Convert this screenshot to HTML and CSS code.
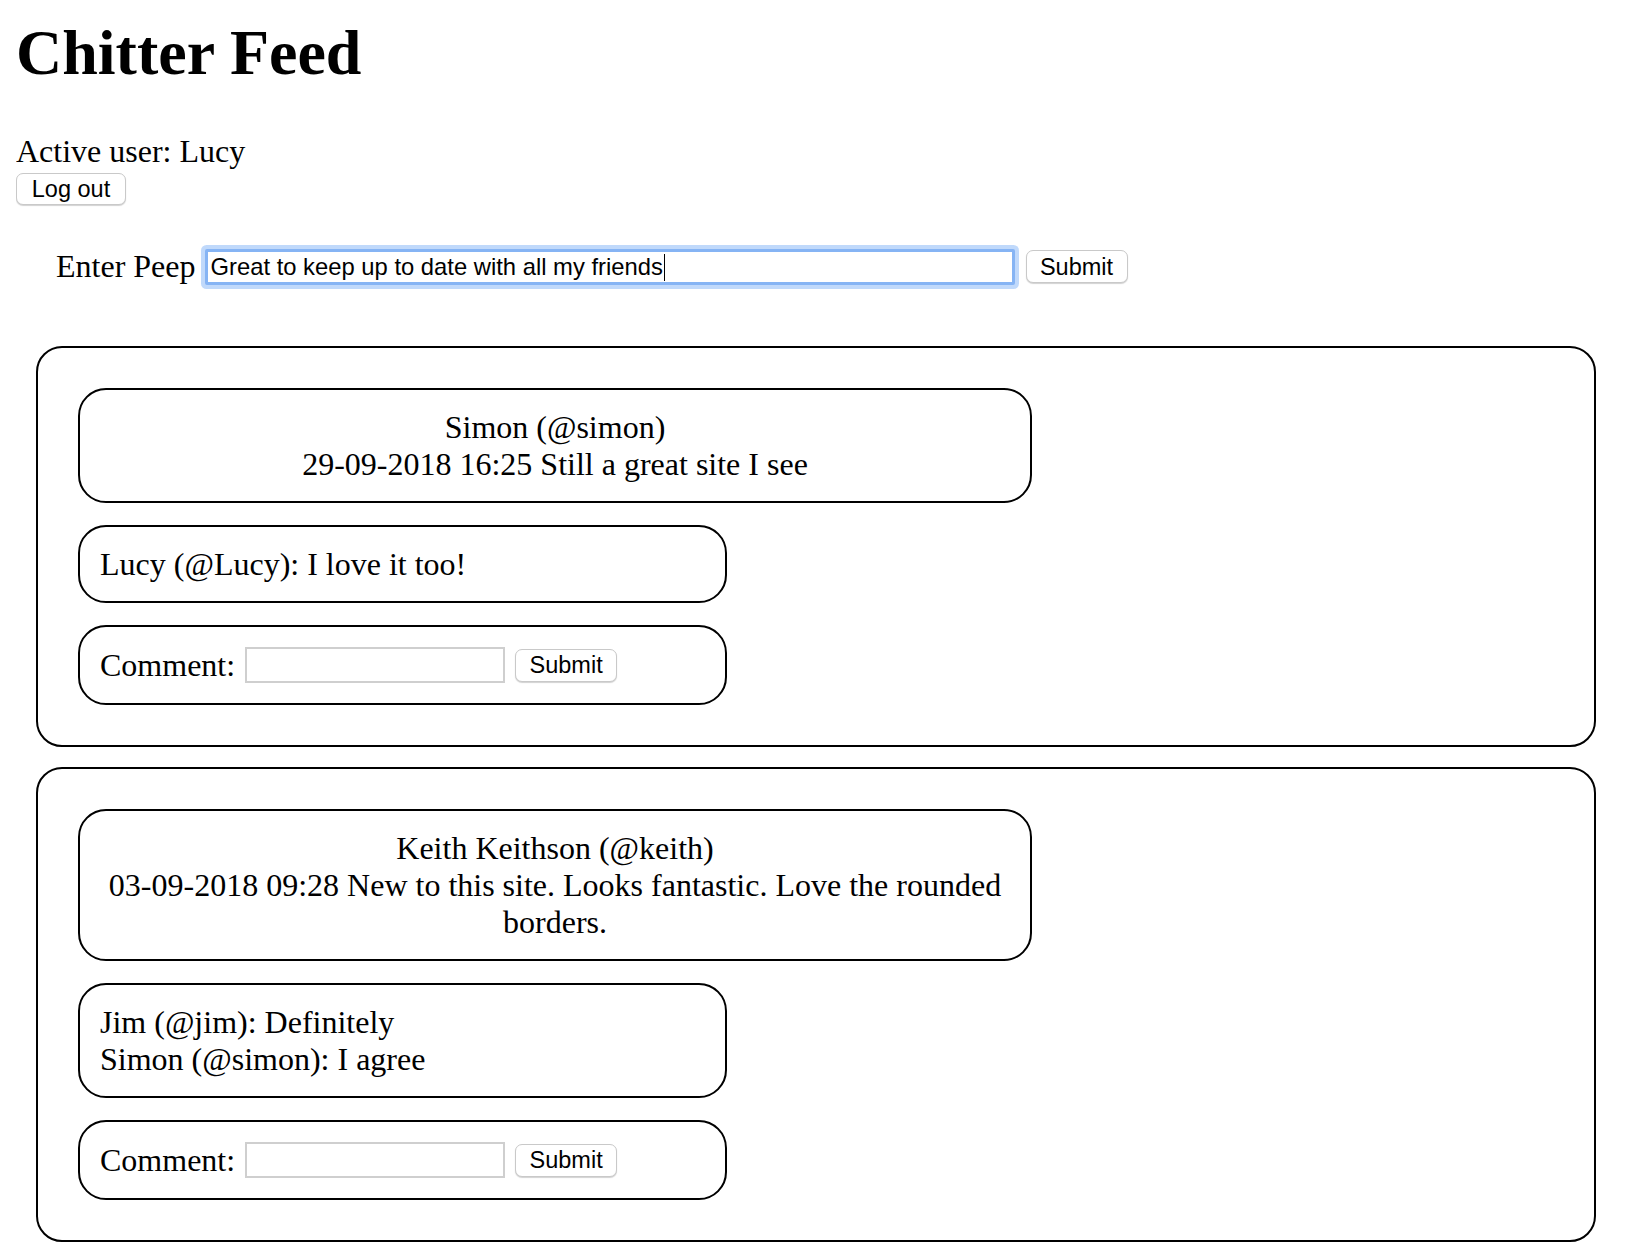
FILE: index.html
```html
<!DOCTYPE html>
<html lang="en">
<head>
<meta charset="utf-8">
<title>Chitter Feed</title>
<link rel="stylesheet" href="styles.css">
</head>
<body>
<h1 class="title">Chitter Feed</h1>
<div class="user">Active user: Lucy</div>
<form class="logout-form">
  <button type="button" class="btn btn-logout">Log out</button>
</form>
<form class="peep-form">
  <label class="peep-label">Enter Peep</label>
  <div class="peep-input" role="textbox"><span class="peep-text">Great to keep up to date with all my friends</span><span class="caret"></span></div>
  <button type="button" class="btn btn-submit">Submit</button>
</form>
<div class="feed">
  <div class="post">
    <div class="peep">
      <div>Simon (@simon)</div>
      <div>29-09-2018 16:25 Still a great site I see</div>
    </div>
    <div class="comments">
      <div>Lucy (@Lucy): I love it too!</div>
    </div>
    <form class="comment-form">
      <label class="comment-label">Comment:</label>
      <input type="text" class="comment-input">
      <button type="button" class="btn btn-submit">Submit</button>
    </form>
  </div>
  <div class="post">
    <div class="peep">
      <div>Keith Keithson (@keith)</div>
      <div>03-09-2018 09:28 New to this site. Looks fantastic. Love the rounded borders.</div>
    </div>
    <div class="comments">
      <div>Jim (@jim): Definitely</div>
      <div>Simon (@simon): I agree</div>
    </div>
    <form class="comment-form">
      <label class="comment-label">Comment:</label>
      <input type="text" class="comment-input">
      <button type="button" class="btn btn-submit">Submit</button>
    </form>
  </div>
</div>
</body>
</html>
```
FILE: styles.css
```css
html, body {
  background: #fff;
}
body {
  margin: 16px 16px 0 16px;
  font-family: "Liberation Serif", "Times New Roman", serif;
  font-size: 32px;
  line-height: normal;
  color: #000;
}
.title {
  margin: 0 0 43px 0;
  font-size: 64px;
  font-weight: bold;
  line-height: normal;
}
.user {
  line-height: normal;
}
.logout-form {
  margin: 0;
}
.btn {
  display: inline-flex;
  align-items: center;
  justify-content: center;
  box-sizing: border-box;
  height: 33px;
  padding: 1px 0 0 0;
  font-family: "Liberation Sans", Arial, sans-serif;
  font-size: 23.5px;
  color: #000;
  background: #fff;
  border: 1px solid #c9c9c9;
  border-radius: 7px;
  box-shadow: 0 1px 1px rgba(0, 0, 0, 0.18);
}
.btn-logout {
  display: flex;
  margin-top: 3px;
  width: 110px;
  height: 32px;
}
.btn-submit {
  width: 102px;
}
.peep-form {
  display: flex;
  align-items: center;
  margin: 43px 0 0 0;
  padding-left: 40px;
  height: 37px;
}
.peep-label {
  margin-right: 9px;
}
.peep-input {
  display: flex;
  align-items: center;
  box-sizing: border-box;
  width: 810px;
  height: 36px;
  padding: 1px 3px 0 3px;
  border: 3px solid #86b4f4;
  border-radius: 2px;
  box-shadow: 0 0 0 4px rgba(140, 185, 248, 0.55);
  font-family: "Liberation Sans", Arial, sans-serif;
  font-size: 23.8px;
  background: #fff;
}
.caret {
  display: inline-block;
  width: 1px;
  height: 27px;
  background: #000;
  margin-left: 1px;
}
.peep-form .btn-submit {
  margin-left: 11px;
}
.feed {
  display: flex;
  flex-direction: column;
  gap: 20px;
  margin: 61px 22px 0 20px;
}
.post {
  display: flex;
  flex-direction: column;
  align-items: flex-start;
  gap: 22px;
  padding: 40px;
  border: 2px solid #000;
  border-radius: 26px;
}
.peep {
  box-sizing: border-box;
  width: 954px;
  padding: 18.5px 20px;
  border: 2px solid #000;
  border-radius: 28px;
  text-align: center;
}
.comments {
  box-sizing: border-box;
  width: 649px;
  padding: 18.5px 20px;
  border: 2px solid #000;
  border-radius: 28px;
}
.comment-form {
  display: flex;
  align-items: center;
  box-sizing: border-box;
  width: 649px;
  height: 80px;
  margin: 0;
  padding: 0 20px;
  border: 2px solid #000;
  border-radius: 28px;
}
.comment-label {
  margin-right: 10px;
}
.comment-input {
  box-sizing: border-box;
  width: 260px;
  height: 36px;
  margin: 0 10px 0 0;
  padding: 0 4px;
  border: 2px solid #cfcfcf;
  border-radius: 0;
  font-family: "Liberation Sans", Arial, sans-serif;
  font-size: 24px;
  background: #fff;
  outline: none;
}
```
